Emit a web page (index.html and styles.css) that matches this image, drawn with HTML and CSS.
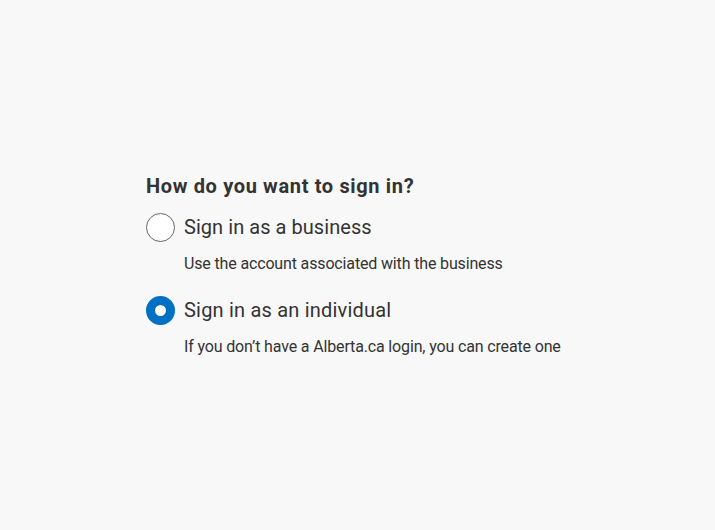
FILE: index.html
```html
<!DOCTYPE html>
<html>
<head>
<meta charset="utf-8">
<link rel="stylesheet" href="styles.css">
</head>
<body>
<main class="page">
  <fieldset class="group">
    <legend class="legend">How do you want to sign in?</legend>
    <label class="option">
      <span class="radio"></span>
      <span class="text">
        <span class="label">Sign in as a business</span>
        <span class="desc">Use the account associated with the business</span>
      </span>
    </label>
    <label class="option">
      <span class="radio checked"></span>
      <span class="text">
        <span class="label label-wide">Sign in as an individual</span>
        <span class="desc">If you don’t have a Alberta.ca login, you can create one</span>
      </span>
    </label>
  </fieldset>
</main>
</body>
</html>
```
FILE: styles.css
```css
html, body {
  margin: 0;
  padding: 0;
  background: #f8f8f8;
  font-family: Roboto, "Liberation Sans", sans-serif;
  color: #333;
}
.page {
  height: 530px;
  padding: 172px 0 0 146px;
  box-sizing: border-box;
}
.group {
  border: 0;
  margin: 0;
  padding: 0;
  display: flex;
  flex-direction: column;
}
.legend {
  padding: 0;
  font-size: 20px;
  font-weight: 700;
  letter-spacing: 0.65px;
  line-height: 28px;
  margin-bottom: 13px;
}
.option {
  display: flex;
  gap: 9px;
  margin-bottom: 21px;
}
.radio {
  flex: none;
  width: 29px;
  height: 29px;
  box-sizing: border-box;
  border-radius: 50%;
  border: 1px solid #666;
  background: #fff;
}
.radio.checked {
  border: 9px solid #0070c4;
}
.text {
  display: flex;
  flex-direction: column;
}
.label {
  font-size: 20px;
  line-height: 28px;
  letter-spacing: 0.05px;
}
.label-wide {
  letter-spacing: 0.2px;
}
.desc {
  margin-top: 12px;
  font-size: 16px;
  letter-spacing: -0.15px;
  line-height: 22px;
}
```
